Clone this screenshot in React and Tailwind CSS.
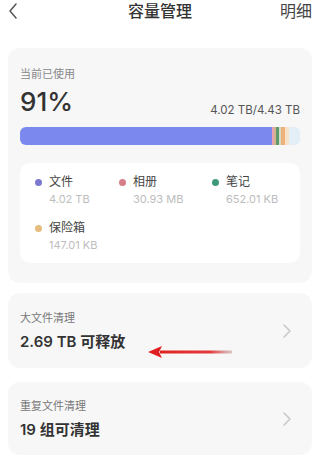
import React from "react";

const font = { fontFamily: '"Inter", "Noto Sans CJK SC", sans-serif' };

function Chevron({ className }) {
  return (
    <svg className={className} width="10" height="16" viewBox="0 0 10 16" fill="none">
      <path d="M2 2l6 6-6 6" stroke="#c9c9c9" strokeWidth="1.6" strokeLinecap="round" strokeLinejoin="round" />
    </svg>
  );
}

function Legend({ color, name, value }) {
  return (
    <div className="flex items-start">
      <span className="mt-[5px] h-[7px] w-[7px] rounded-full" style={{ background: color }} />
      <div className="ml-[7px] flex flex-col">
        <span className="text-[12px] leading-[16px] text-[#444]">{name}</span>
        <span className="mt-[2px] text-[11px] leading-[14px] text-[#bdbdbd]">{value}</span>
      </div>
    </div>
  );
}

export default function App() {
  return (
    <div className="relative h-[469px] w-[320px] overflow-hidden bg-white" style={font}>
      {/* header */}
      <div className="relative flex h-[22px] items-center justify-between px-[8px]">
        <svg width="10" height="16" viewBox="0 0 10 16" fill="none">
          <path d="M8 1L2 8l6 7" stroke="#555" strokeWidth="1.5" strokeLinecap="round" strokeLinejoin="round" />
        </svg>
        <span className="absolute left-1/2 -translate-x-1/2 text-[16px] font-medium text-[#333]">容量管理</span>
        <span className="text-[16px] text-[#444]">明细</span>
      </div>

      {/* card 1 */}
      <div className="mx-[8px] mt-[26px] rounded-[12px] bg-[#f7f7f8] px-[12px] pt-[19px] pb-[20px]">
        <div className="text-[11px] leading-[14px] text-[#888]">当前已使用</div>
        <div className="mt-[5px] flex items-end justify-between">
          <span className="text-[26px] font-medium leading-[32px] text-[#333]">91%</span>
          <span className="mb-[1px] text-[11.5px] leading-[14px] text-[#555]">4.02 TB/4.43 TB</span>
        </div>
        <div className="mt-[9px] flex h-[18px] w-full overflow-hidden rounded-[6px] bg-[#e8eef6]">
          <div className="h-full w-[252px] bg-[#7b88ee]" />
          <div className="h-full w-[2px] bg-[#e8a3b0]" />
          <div className="h-full w-[2px] bg-[#d4b48a]" />
          <div className="h-full w-[3px] bg-[#5e9a6e]" />
          <div className="h-full w-[2px] bg-[#d5d9c8]" />
          <div className="h-full w-[4px] bg-[#eeb27a]" />
          <div className="h-full w-[4px] bg-[#f8e2cc]" />
          <div className="h-full flex-1 bg-[#e3eef6]" />
        </div>

        <div className="mt-[18px] rounded-[10px] bg-white px-[15px] pt-[11px] pb-[11px]">
          <div className="grid grid-cols-[84px_93px_1fr] gap-y-[14px]">
            <Legend color="#7c78cf" name="文件" value="4.02 TB" />
            <Legend color="#d77f88" name="相册" value="30.93 MB" />
            <Legend color="#3f9a7a" name="笔记" value="652.01 KB" />
            <Legend color="#e6bd7c" name="保险箱" value="147.01 KB" />
          </div>
        </div>
      </div>

      {/* card 2 */}
      <div className="relative mx-[8px] mt-[10px] flex h-[75px] items-center justify-between rounded-[12px] bg-[#f7f7f8] pl-[12px] pr-[20px]">
        <div className="flex flex-col">
          <span className="text-[11px] leading-[14px] text-[#777]">大文件清理</span>
          <span className="mt-[8px] text-[15px] font-semibold leading-[18px] text-[#333]">2.69 TB 可释放</span>
        </div>
        <Chevron />
      </div>

      {/* card 3 */}
      <div className="mx-[8px] mt-[14px] flex h-[73px] items-center justify-between rounded-[12px] bg-[#f7f7f8] pl-[12px] pr-[20px]">
        <div className="flex flex-col">
          <span className="text-[11px] leading-[14px] text-[#777]">重复文件清理</span>
          <span className="mt-[8px] text-[15px] font-semibold leading-[18px] text-[#333]">19 组可清理</span>
        </div>
        <Chevron />
      </div>

      {/* red arrow annotation */}
      <svg className="absolute left-[146px] top-[344px]" width="90" height="16" viewBox="0 0 90 16">
        <defs>
          <linearGradient id="sh" x1="0" x2="1">
            <stop offset="0" stopColor="#e02020" />
            <stop offset="0.7" stopColor="#e53a3a" />
            <stop offset="1" stopColor="#c9a0a0" stopOpacity="0.6" />
          </linearGradient>
        </defs>
        <path d="M14 6.5 L86 6.5 L86 9.5 L14 9.5 Z" fill="url(#sh)" />
        <path d="M2 8 L16 2 L13 8 L16 14 Z" fill="#e02020" />
      </svg>
    </div>
  );
}
